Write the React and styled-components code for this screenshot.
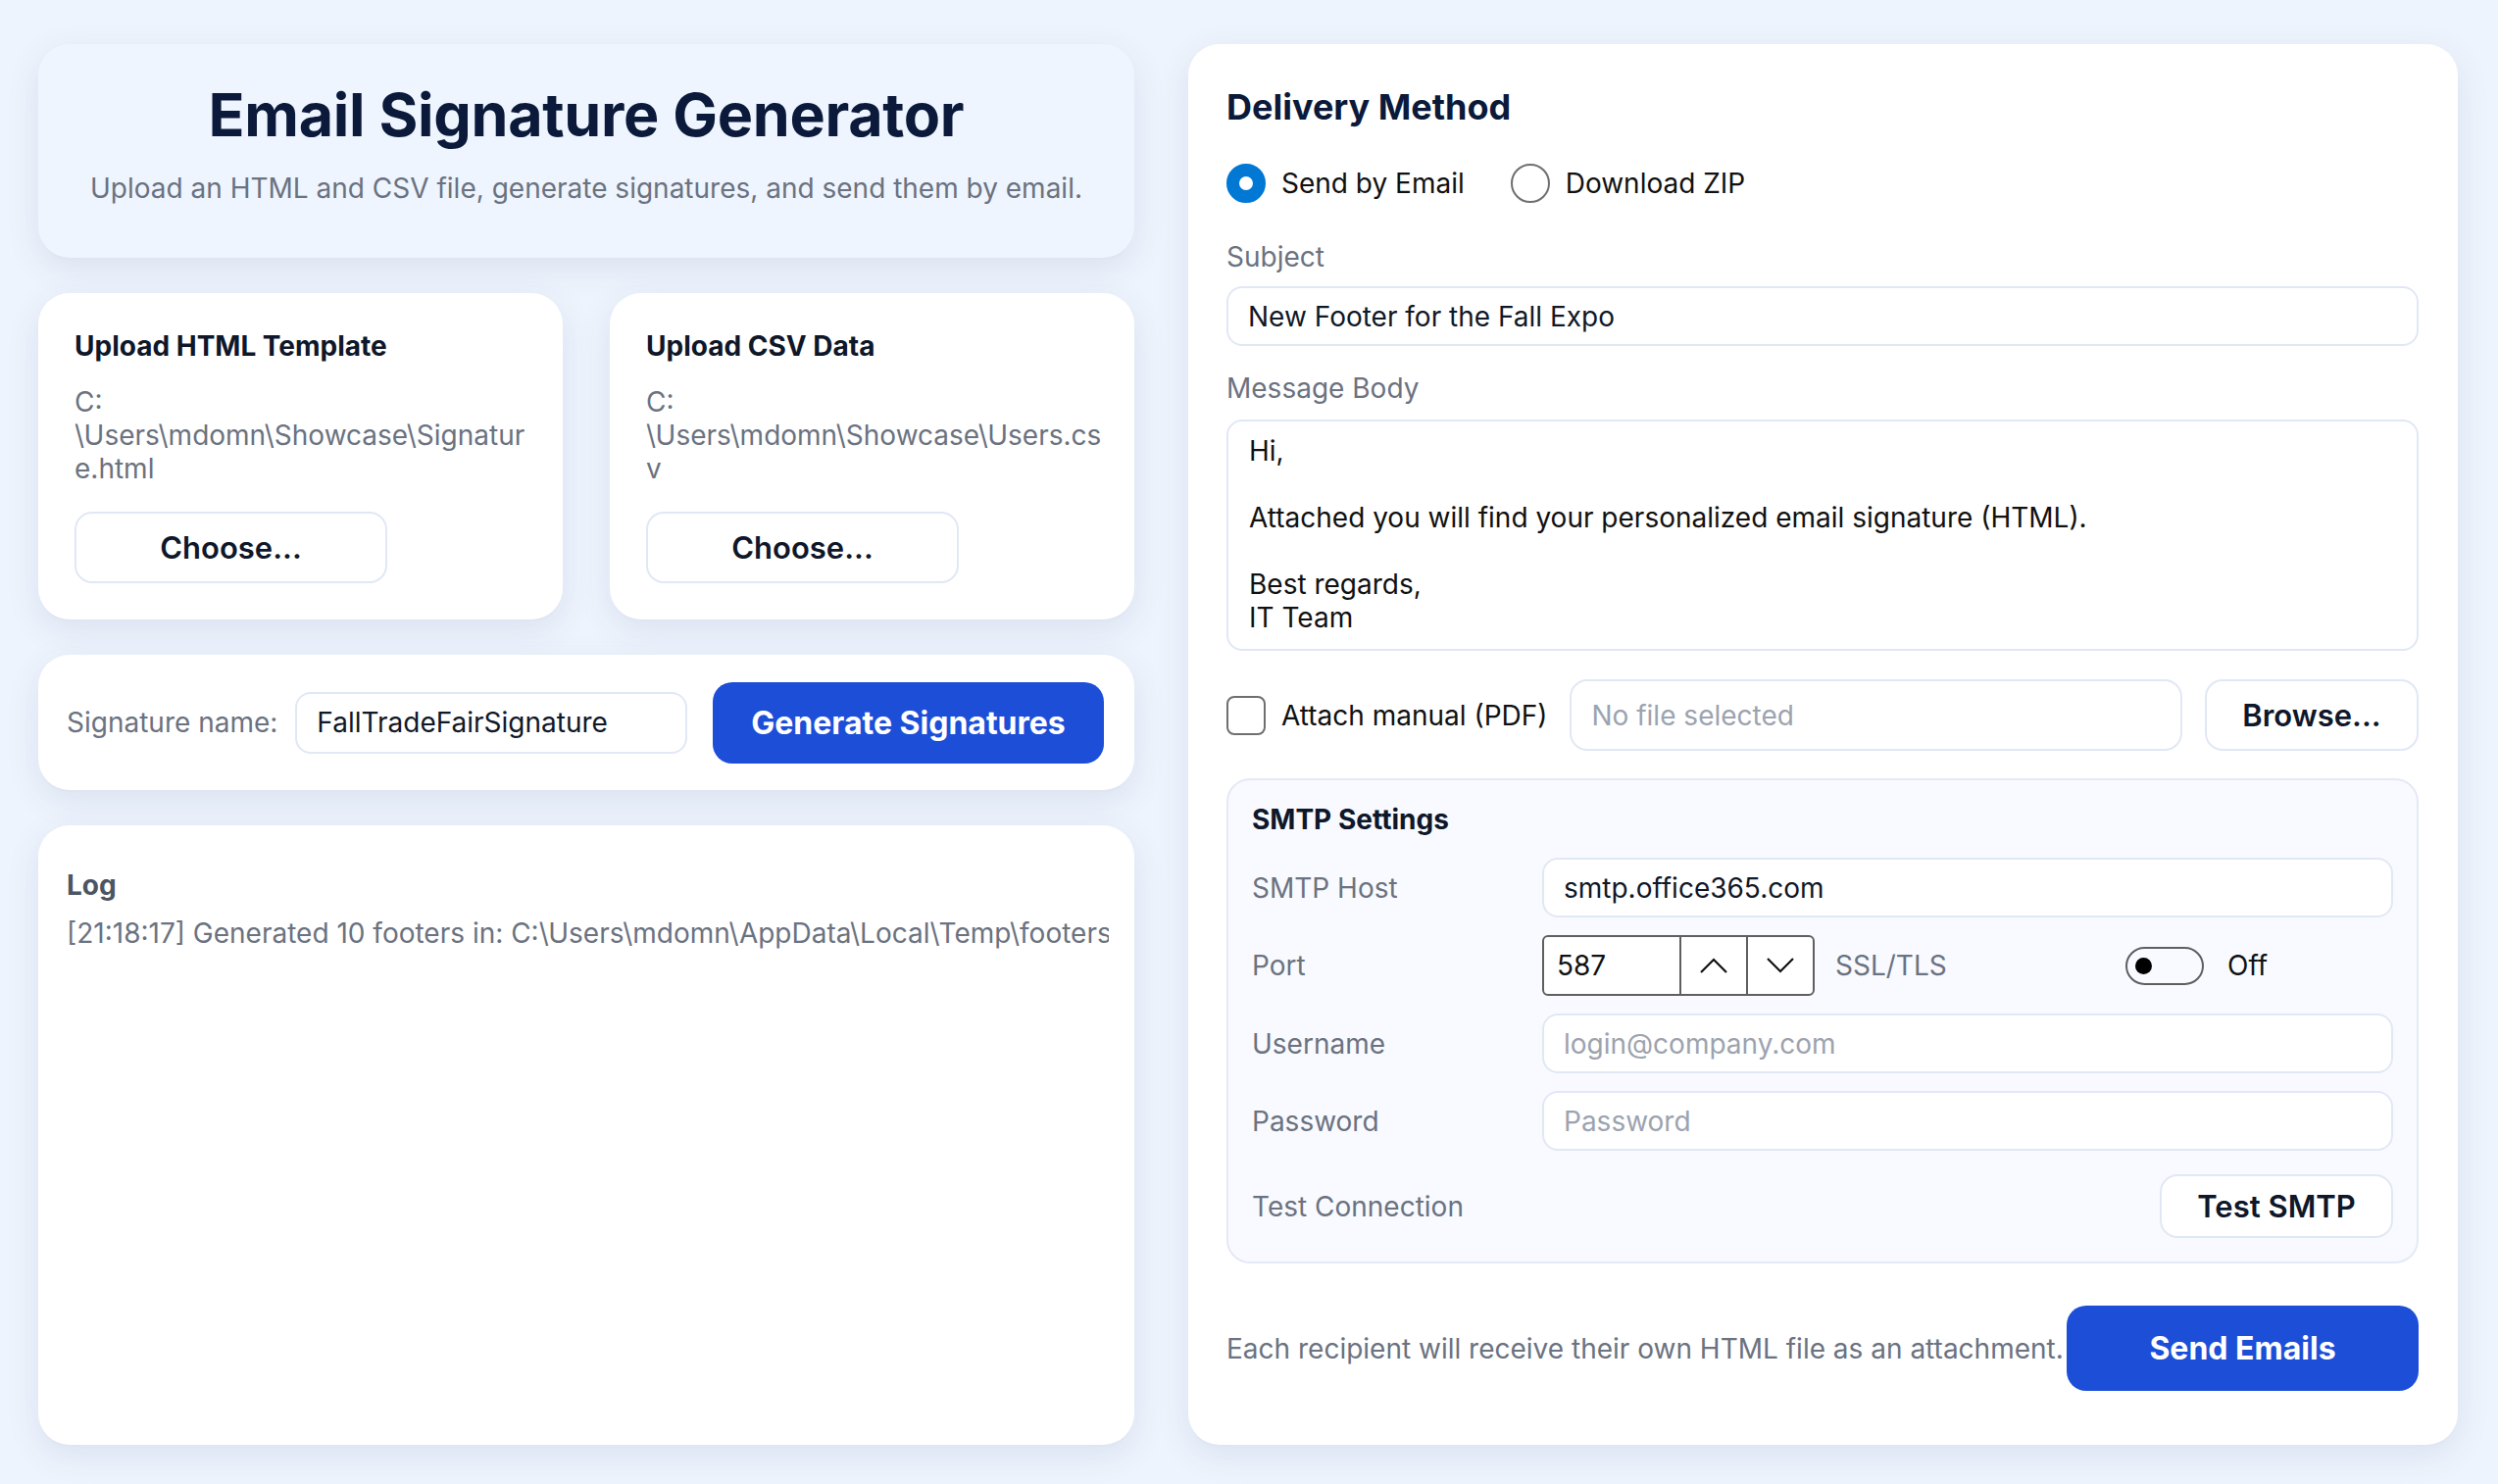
import styled, { createGlobalStyle } from "styled-components";

const GlobalStyle = createGlobalStyle`
    *{ box-sizing: border-box; }
    html, body{ margin: 0; padding: 0; }
    body{
        background: #eef4fd;
        font-family: Inter, "Noto Sans", "Liberation Sans", sans-serif;
        color: #111827;
    }
`;

const Page = styled.main`
    height: 100vh;
    display: grid;
    grid-template-columns: 1118px 1fr;
    gap: 55px;
    padding: 45px 41px 40px 39px;
`;

const Column = styled.div`
    display: flex;
    flex-direction: column;
    gap: 36px;
    min-height: 0;
`;

const Card = styled.section`
    background: #fff;
    border-radius: 32px;
    box-shadow: 0 3px 0 -1px #dfe6f1, 0 10px 34px rgba(40, 70, 130, .10);
`;

const Header = styled(Card)`
    background: #eef5ff;
    text-align: center;
    padding: 36px 16px 50px;
    h1{
        margin: 0;
        font-size: 61px;
        line-height: 72px;
        font-weight: 700;
        color: #0b1a3a;
        letter-spacing: -.3px;
    }
    p{
        margin: 19px 0 0;
        font-size: 28px;
        line-height: 41px;
        color: #6b7280;
        white-space: nowrap;
    }
`;

const UploadRow = styled.div`
    display: grid;
    grid-template-columns: 1fr 1fr;
    gap: 48px;
`;

const UploadCard = styled(Card)`
    padding: 37px 30px 37px 37px;
`;

const CardTitle = styled.h3`
    margin: 0;
    font-size: 28px;
    line-height: 34px;
    font-weight: 700;
    color: ${p => p.$muted ? "#4b5563" : "#0f172a"};
`;

const Path = styled.p`
    margin: 23px 0 27px;
    font-size: 28px;
    line-height: 34px;
    color: #6b7280;
    white-space: nowrap;
`;

const Button = styled.button`
    font-family: inherit;
    font-size: 31px;
    font-weight: 600;
    color: #0f172a;
    background: #fff;
    border: 2px solid #e1e8f5;
    border-radius: 18px;
    height: ${p => p.$h || 73}px;
    width: ${p => p.$w ? p.$w + "px" : "auto"};
    padding: 0 20px;
    flex-shrink: 0;
`;

const PrimaryButton = styled(Button)`
    background: #1d4ed8;
    border: none;
    color: #fff;
    font-size: 32px;
    font-weight: 700;
    border-radius: 20px;
`;

const SignatureCard = styled(Card)`
    height: 138px;
    display: flex;
    align-items: center;
    padding: 0 31px 0 29px;
    gap: 18px;
    label{
        font-size: 28px;
        color: #6b7280;
        white-space: nowrap;
    }
    ${PrimaryButton}{ margin-left: 8px; }
`;

const Input = styled.div`
    flex: 1;
    height: ${p => p.$h || 61}px;
    display: flex;
    align-items: center;
    padding: 0 20px;
    background: #fff;
    border: 2px solid #e1e8f5;
    border-radius: 16px;
    font-size: 28px;
    color: ${p => p.$placeholder ? "#9ca3af" : "#111827"};
    white-space: nowrap;
    overflow: hidden;
`;

const LogCard = styled(Card)`
    flex: 1;
    padding: 44px 26px 0 29px;
    overflow: hidden;
`;

const LogLine = styled.div`
    margin-top: 15px;
    font-size: 28px;
    line-height: 34px;
    color: #6b7280;
    white-space: nowrap;
    overflow: hidden;
`;

const RightCard = styled(Card)`
    padding: 42px 40px 55px 39px;
    display: flex;
    flex-direction: column;
    h2{
        margin: 0;
        font-size: 36px;
        line-height: 45px;
        font-weight: 700;
        color: #0b1a3a;
    }
`;

const RadioRow = styled.div`
    display: flex;
    align-items: center;
    gap: 47px;
    margin: 35px 0 38px;
`;

const Option = styled.label`
    display: flex;
    align-items: center;
    gap: 16px;
    font-size: 28px;
    color: #111;
    white-space: nowrap;
`;

const Radio = styled.span`
    width: 40px;
    height: 40px;
    border-radius: 50%;
    border: ${p => p.$checked ? "13px solid #0078d4" : "2px solid #6f6f6f"};
    background: #fff;
`;

const FieldLabel = styled.div`
    font-size: 28px;
    line-height: 34px;
    color: #6b7280;
    margin-top: ${p => p.$top || 0}px;
    margin-bottom: ${p => p.$gap || 13}px;
`;

const TextArea = styled.div`
    height: 236px;
    margin-top: 1px;
    padding: 13px 21px;
    border: 2px solid #e1e8f5;
    border-radius: 16px;
    font-size: 28px;
    line-height: 34px;
    color: #111;
    white-space: pre-line;
`;

const AttachRow = styled.div`
    display: flex;
    align-items: center;
    gap: 23px;
    margin: 29px 0 28px;
    ${Input}{ border-radius: 18px; }
`;

const Checkbox = styled.span`
    width: 40px;
    height: 40px;
    border: 2px solid #6f6f6f;
    border-radius: 8px;
    flex-shrink: 0;
`;

const SmtpBox = styled.div`
    background: #f8faff;
    border: 2px solid #e3e9f5;
    border-radius: 24px;
    padding: 23px 24px 24px;
`;

const SmtpGrid = styled.div`
    display: grid;
    grid-template-columns: 296px 1fr;
    align-items: center;
    row-gap: 18px;
    margin-top: 22px;
`;

const SmtpLabel = styled.div`
    font-size: 28px;
    color: ${p => p.$dark ? "#111" : "#6b7280"};
    width: ${p => p.$w ? p.$w + "px" : "auto"};
`;

const PortRow = styled.div`
    display: flex;
    align-items: center;
`;

const Spin = styled.div`
    display: flex;
    height: 62px;
    border: 2px solid #5f5f5f;
    border-radius: 6px;
    background: #fff;
    margin-right: 21px;
    span{
        width: 138px;
        padding-left: 13px;
        display: flex;
        align-items: center;
        font-size: 28px;
        color: #111;
    }
`;

const SpinButton = styled.div`
    width: 68px;
    display: flex;
    align-items: center;
    justify-content: center;
    border-left: 2px solid #5f5f5f;
`;

const Toggle = styled.span`
    width: 80px;
    height: 39px;
    border: 2px solid #5f5f5f;
    border-radius: 20px;
    position: relative;
    margin-right: 24px;
    &::after{
        content: "";
        position: absolute;
        left: 8px;
        top: 9px;
        width: 17px;
        height: 17px;
        border-radius: 50%;
        background: #000;
    }
`;

const TestRow = styled.div`
    grid-column: 1 / 3;
    display: flex;
    align-items: center;
    justify-content: space-between;
    margin-top: 6px;
`;

const Footer = styled.div`
    display: flex;
    align-items: center;
    justify-content: space-between;
    margin-top: 43px;
    p{
        margin: 0;
        font-size: 28px;
        color: #6b7280;
        white-space: nowrap;
    }
`;

const Chevron = ({ up }) => (
    <svg width="30" height="18" viewBox="0 0 30 18" fill="none" stroke="#111" strokeWidth="2.2">
        <path d={up ? "M2 16 L15 3 L28 16" : "M2 2 L15 15 L28 2"} />
    </svg>
);

const App = () => {
    return (
        <>
            <GlobalStyle />
            <Page>
                <Column>
                    <Header>
                        <h1>Email Signature Generator</h1>
                        <p>Upload an HTML and CSV file, generate signatures, and send them by email.</p>
                    </Header>
                    <UploadRow>
                        <UploadCard>
                            <CardTitle>Upload HTML Template</CardTitle>
                            <Path>C:<br />\Users\mdomn\Showcase\Signatur<br />e.html</Path>
                            <Button $w={319}>Choose...</Button>
                        </UploadCard>
                        <UploadCard>
                            <CardTitle>Upload CSV Data</CardTitle>
                            <Path>C:<br />\Users\mdomn\Showcase\Users.cs<br />v</Path>
                            <Button $w={319}>Choose...</Button>
                        </UploadCard>
                    </UploadRow>
                    <SignatureCard>
                        <label>Signature name:</label>
                        <Input $h={63}>FallTradeFairSignature</Input>
                        <PrimaryButton $w={399} $h={83}>Generate Signatures</PrimaryButton>
                    </SignatureCard>
                    <LogCard>
                        <CardTitle $muted>Log</CardTitle>
                        <LogLine>[21:18:17] Generated 10 footers in: C:\Users\mdomn\AppData\Local\Temp\footers</LogLine>
                    </LogCard>
                </Column>

                <RightCard>
                    <h2>Delivery Method</h2>
                    <RadioRow>
                        <Option><Radio $checked />Send by Email</Option>
                        <Option><Radio />Download ZIP</Option>
                    </RadioRow>
                    <FieldLabel>Subject</FieldLabel>
                    <Input style={{ flex: "none" }}>New Footer for the Fall Expo</Input>
                    <FieldLabel $top={26} $gap={14}>Message Body</FieldLabel>
                    <TextArea>{"Hi,\n\nAttached you will find your personalized email signature (HTML).\n\nBest regards,\nIT Team"}</TextArea>
                    <AttachRow>
                        <Option><Checkbox />Attach manual (PDF)</Option>
                        <Input $h={73} $placeholder>No file selected</Input>
                        <Button $w={218}>Browse...</Button>
                    </AttachRow>
                    <SmtpBox>
                        <CardTitle>SMTP Settings</CardTitle>
                        <SmtpGrid>
                            <SmtpLabel>SMTP Host</SmtpLabel>
                            <Input>smtp.office365.com</Input>
                            <SmtpLabel>Port</SmtpLabel>
                            <PortRow>
                                <Spin>
                                    <span>587</span>
                                    <SpinButton><Chevron up /></SpinButton>
                                    <SpinButton><Chevron /></SpinButton>
                                </Spin>
                                <SmtpLabel $w={296}>SSL/TLS</SmtpLabel>
                                <Toggle />
                                <SmtpLabel $dark>Off</SmtpLabel>
                            </PortRow>
                            <SmtpLabel>Username</SmtpLabel>
                            <Input $placeholder>login@company.com</Input>
                            <SmtpLabel>Password</SmtpLabel>
                            <Input $placeholder>Password</Input>
                            <TestRow>
                                <SmtpLabel>Test Connection</SmtpLabel>
                                <Button $w={238} $h={65}>Test SMTP</Button>
                            </TestRow>
                        </SmtpGrid>
                    </SmtpBox>
                    <Footer>
                        <p>Each recipient will receive their own HTML file as an attachment.</p>
                        <PrimaryButton $w={359} $h={87}>Send Emails</PrimaryButton>
                    </Footer>
                </RightCard>
            </Page>
        </>
    );
};

export default App;
